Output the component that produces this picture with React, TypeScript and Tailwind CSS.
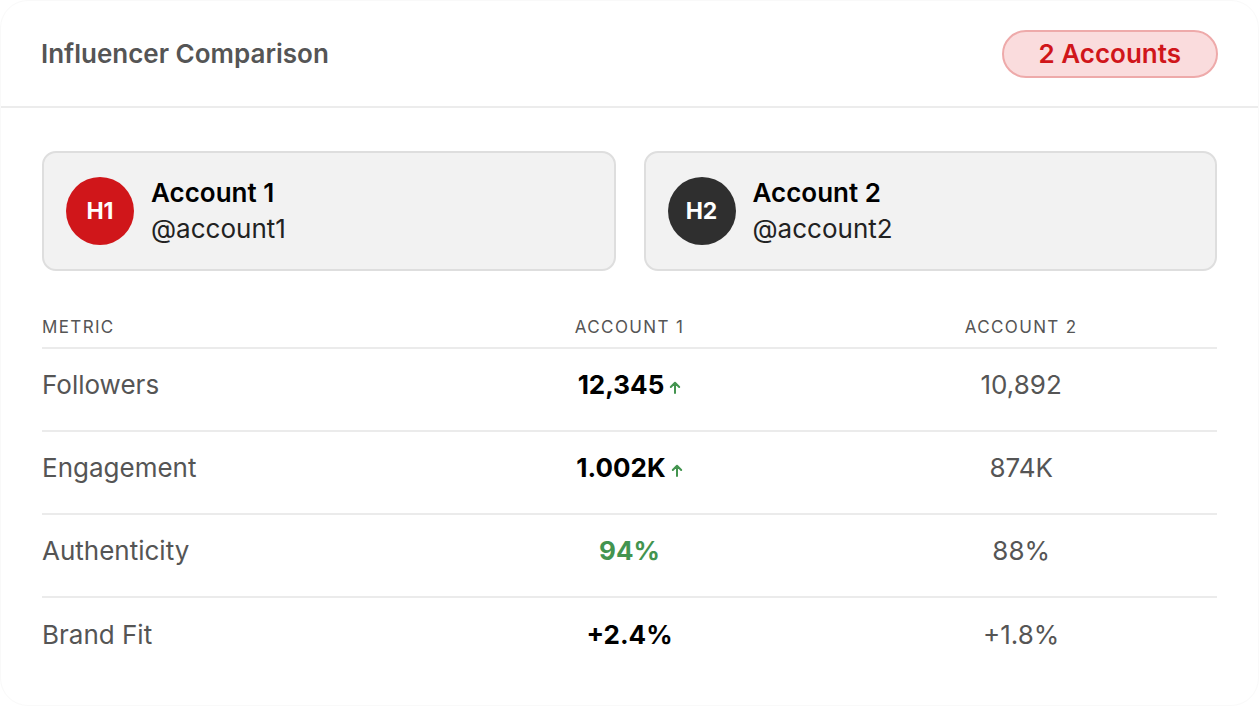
import { ReactNode } from 'react'

type Row = {
  metric: string
  a1: ReactNode
  a2: string
}

// small green "up" marker that sits on the number's baseline
function UpArrow() {
  return (
    <svg width="12" height="13" viewBox="0 0 12 13" fill="none" className="ml-[5px] inline align-baseline">
      <path d="M6 12V1.8M1.8 6L6 1.8L10.2 6" stroke="#43944f" strokeWidth="2" strokeLinecap="round" strokeLinejoin="round" />
    </svg>
  )
}

const rows: Row[] = [
  {
    metric: 'Followers',
    a1: (
      <span className="font-bold text-black">
        12,345
        <UpArrow />
      </span>
    ),
    a2: '10,892',
  },
  {
    metric: 'Engagement',
    a1: (
      <span className="font-bold text-black">
        1.002K
        <UpArrow />
      </span>
    ),
    a2: '874K',
  },
  {
    metric: 'Authenticity',
    a1: <span className="font-bold text-[#43944f]">94%</span>,
    a2: '88%',
  },
  {
    metric: 'Brand Fit',
    a1: <span className="font-bold text-black">+2.4%</span>,
    a2: '+1.8%',
  },
]

function AccountCard({ initials, name, handle, color }: { initials: string; name: string; handle: string; color: string }) {
  return (
    <div className="flex h-[120px] items-center gap-[17px] rounded-[14px] border-2 border-[#dedede] bg-[#f2f2f2] px-[22px]">
      <div className={`flex h-[68px] w-[68px] items-center justify-center rounded-full text-[23px] font-bold text-white ${color}`}>
        {initials}
      </div>
      <div className="flex flex-col leading-[36px]">
        <span className="text-[26px] font-semibold text-black">{name}</span>
        <span className="text-[26px] text-[#222]">{handle}</span>
      </div>
    </div>
  )
}

export default function App() {
  return (
    <div className="h-[706px] w-full bg-white" style={{ fontFamily: 'Inter, "Liberation Sans", sans-serif' }}>
      <div className="h-full overflow-hidden rounded-[28px] border border-[#f9f9f9] bg-white">
        {/* Header */}
        <div className="flex h-[107px] items-center justify-between border-b-2 border-[#ececec] px-[40px]">
          <h1 className="text-[26px] font-semibold text-[#555]">Influencer Comparison</h1>
          <span className="flex h-[48px] items-center rounded-full border-2 border-[#eeaaaa] bg-[#fadcdd] px-[35px] text-[26px] font-semibold text-[#d0161a]">
            2 Accounts
          </span>
        </div>

        <div className="px-[41px] pt-[43px]">
          {/* Account cards */}
          <div className="grid grid-cols-2 gap-[28px]">
            <AccountCard initials="H1" name="Account 1" handle="@account1" color="bg-[#d0161a]" />
            <AccountCard initials="H2" name="Account 2" handle="@account2" color="bg-[#2f2f2f]" />
          </div>

          {/* Metrics table */}
          <div className="mt-[34px]">
            <div className="grid h-[44px] grid-cols-3 items-center border-b-2 border-[#ebebeb] pt-[4px] text-[17px] tracking-[0.08em] text-[#555]">
              <span>METRIC</span>
              <span className="text-center">ACCOUNT 1</span>
              <span className="text-center">ACCOUNT 2</span>
            </div>
            {rows.map((r, i) => (
              <div
                key={r.metric}
                className={`grid h-[83px] grid-cols-3 items-center pb-[10px] text-[26px] ${i < rows.length - 1 ? 'border-b-2 border-[#ebebeb]' : ''}`}
              >
                <span className="text-[#555]">{r.metric}</span>
                <span className="text-center">{r.a1}</span>
                <span className="text-center text-[#555]">{r.a2}</span>
              </div>
            ))}
          </div>
        </div>
      </div>
    </div>
  )
}
